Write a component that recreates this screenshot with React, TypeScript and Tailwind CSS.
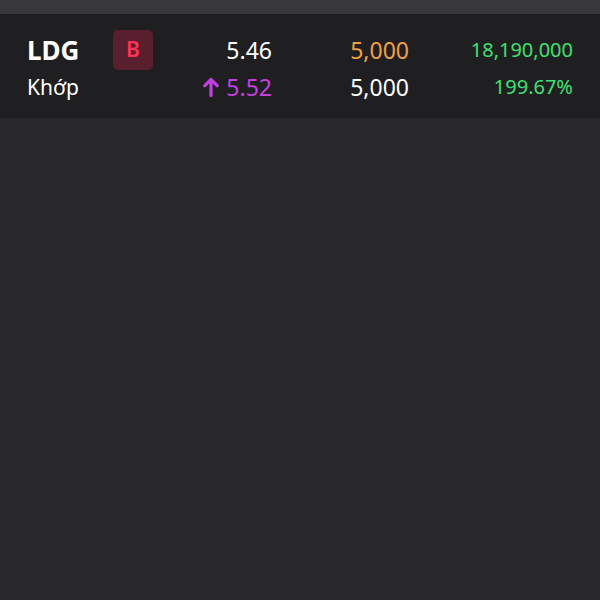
import React from "react";

export default function App() {
  return (
    <div className="w-[600px] h-[600px] bg-[#28282d] flex flex-col" style={{ fontFamily: '"Noto Sans", sans-serif' }}>
      <div className="h-[14px] bg-[#38383c]" />
      <div className="h-[104px] bg-[#1f1f22] pl-[27px] pr-[27px] flex items-stretch">
        <div className="w-[86px] flex flex-col justify-center gap-[7px] pt-[2px]">
          <div className="text-[26px] leading-[32px] font-bold text-white">LDG</div>
          <div className="text-[21px] leading-[28px] text-white">Khớp</div>
        </div>
        <div className="pt-[16px]">
          <div className="w-[40px] h-[40px] rounded-[5px] bg-[#5a1f2f] flex items-center justify-center text-[#ff3358] text-[21px] font-semibold">B</div>
        </div>
        <div className="w-[119px] flex flex-col justify-center items-end gap-[7px] pt-[2px]">
          <div className="text-[23px] leading-[32px] text-white">5.46</div>
          <div className="text-[23px] leading-[28px] text-[#c43fe0] flex items-center gap-[7px]">
            <svg width="16" height="20" viewBox="0 0 16 20" fill="none" stroke="#c43fe0" strokeWidth="3.2" strokeLinecap="round" strokeLinejoin="round">
              <path d="M8 18.5V2.5M1.8 8.7l6.2-6.2 6.2 6.2" />
            </svg>
            <span>5.52</span>
          </div>
        </div>
        <div className="w-[137px] flex flex-col justify-center items-end gap-[7px] pt-[2px]">
          <div className="text-[23px] leading-[32px] text-[#f0a040]">5,000</div>
          <div className="text-[23px] leading-[28px] text-white">5,000</div>
        </div>
        <div className="flex-1 flex flex-col justify-center items-end gap-[7px] pt-[2px]">
          <div className="text-[20px] leading-[32px] text-[#40e070]">18,190,000</div>
          <div className="text-[20px] leading-[28px] text-[#40e070]">199.67%</div>
        </div>
      </div>
      <div className="flex-1" />
    </div>
  );
}
